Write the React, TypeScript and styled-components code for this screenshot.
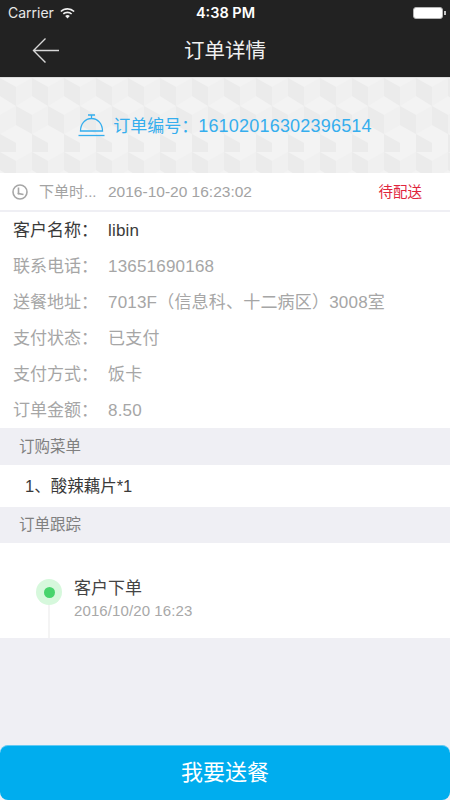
import styled, { createGlobalStyle } from 'styled-components'

const GlobalStyle = createGlobalStyle`
  html, body {
    margin: 0;
    padding: 0;
    background: #efeff4;
  }
  * {
    box-sizing: border-box;
  }
`

const font = `'Liberation Sans', 'Noto Sans CJK SC', sans-serif`

const cubes = encodeURIComponent(
  `<svg xmlns='http://www.w3.org/2000/svg' width='64' height='74'>` +
    `<rect width='64' height='74' fill='#f3f3f3'/>` +
    `<path d='M0 0l16 9v19L0 18zM32 0l16 9v19L32 18zM16 28l16 9v19l-16-9zM48 28l16 9v19l-16-9zM0 56l16 9v9H0zM32 56l16 9v9H32z' fill='#ebebeb'/>` +
    `<path d='M16 9l16-9v18l-16 10zM48 9l16-9v18l-16 10zM0 37l16-9v19L0 56zM32 37l16-9v19l-16 9z' fill='#f0f0f0'/>` +
    `</svg>`
)

const Page = styled.div`
  display: flex;
  flex-direction: column;
  width: 450px;
  height: 800px;
  overflow: hidden;
  background: #efeff4;
  font-family: ${font};
  line-height: 1;
`

const Header = styled.header`
  background: #222222;
  color: white;
  height: 77px;
`

const StatusBar = styled.div`
  display: grid;
  grid-template-columns: 1fr auto 1fr;
  align-items: center;
  height: 26px;
  padding: 0 7px 0 8px;
  font-family: 'Inter', sans-serif;
  font-size: 14px;
`

const Carrier = styled.div`
  display: flex;
  align-items: center;
  gap: 6px;
  color: #e8e8e8;
`

const Clock = styled.div`
  font-size: 14.5px;
  font-weight: 600;
`

const Battery = styled.div`
  justify-self: end;
  position: relative;
  width: 30px;
  height: 12px;
  border: 1px solid #b5b5b5;
  border-radius: 3px;
  background: white;

  &::after {
    content: '';
    position: absolute;
    right: -4px;
    top: 3px;
    width: 2px;
    height: 4px;
    background: #c4c4c4;
  }
`

const NavBar = styled.div`
  position: relative;
  display: flex;
  justify-content: center;
  align-items: center;
  height: 51px;
  font-size: 20.5px;
  color: #f0f0f0;
`

const BackButton = styled.button`
  position: absolute;
  left: 32px;
  top: 11px;
  display: flex;
  padding: 0;
  border: 0;
  background: none;
`

const Banner = styled.div`
  display: flex;
  justify-content: center;
  align-items: center;
  gap: 8px;
  height: 96px;
  border-top: 1px solid #dddddd;
  background: url("data:image/svg+xml,${cubes}");
  color: #35aeee;
  font-size: 17px;
`

const OrderNumber = styled.span`
  font-size: 18px;
  letter-spacing: 0.2px;
`

const TimeRow = styled.div`
  display: flex;
  align-items: center;
  height: 37px;
  padding: 0 28px 0 12px;
  background: white;
  color: #a3a3a3;
  font-size: 15px;
`

const TimeLabel = styled.span`
  width: 69px;
  margin-left: 11px;
`

const TimeValue = styled.span`
  flex: 1;
  font-size: 15.5px;
`

const Status = styled.span`
  padding-top: 2px;
  font-size: 14.5px;
  color: #e0253c;
`

const InfoList = styled.div`
  margin-top: 2px;
  background: white;
`

const InfoRow = styled.div<{ $dark?: boolean }>`
  display: flex;
  align-items: center;
  height: 36px;
  padding-left: 13px;
  font-size: 17px;
  color: ${(p) => (p.$dark ? '#3a3a3a' : '#a6a6a6')};
`

const InfoLabel = styled.span`
  width: 95px;
`

const InfoValue = styled.span`
  letter-spacing: 0.2px;
`

const SectionTitle = styled.div<{ $height: number }>`
  display: flex;
  align-items: center;
  height: ${(p) => p.$height}px;
  padding-left: 19px;
  font-size: 15.5px;
  color: #808080;
`

const MenuItem = styled.div`
  display: flex;
  align-items: center;
  height: 42px;
  padding-left: 25px;
  background: white;
  font-size: 16.5px;
  color: #3a3a3a;
`

const Track = styled.div`
  display: flex;
  height: 95px;
  padding: 36px 0 0 36px;
  background: white;
`

const TrackMarker = styled.div`
  display: flex;
  flex-direction: column;
  align-items: center;
  width: 26px;
`

const Halo = styled.div`
  display: flex;
  flex-shrink: 0;
  justify-content: center;
  align-items: center;
  width: 26px;
  height: 26px;
  border-radius: 50%;
  background: #d6f8dc;
`

const Dot = styled.div`
  width: 11px;
  height: 11px;
  border-radius: 50%;
  background: #47d46c;
`

const TrackLine = styled.div`
  flex: 1;
  width: 2px;
  background: #f4f4f4;
`

const TrackBody = styled.div`
  margin-left: 12px;
`

const TrackTitle = styled.div`
  font-size: 17px;
  line-height: 20px;
  color: #444444;
`

const TrackTime = styled.div`
  margin-top: 2px;
  font-size: 15px;
  line-height: 20px;
  letter-spacing: 0.1px;
  color: #a8a8a8;
`

const DeliverButton = styled.button`
  margin-top: auto;
  height: 55px;
  padding: 0;
  border: 0;
  border-top: 1px solid #62c9f3;
  border-radius: 8px;
  background: #00adee;
  color: white;
  font-size: 22px;
  line-height: 1;
  font-family: ${font};
`

const BackIcon = () => (
  <svg width="28" height="28" viewBox="0 0 28 28" fill="none" stroke="#d8d8d8" strokeWidth="1.4">
    <path d="M13.500 1.500 1.500 13.500 13.500 25.500M1.500 13.500H27" />
  </svg>
)

const WifiIcon = () => (
  <svg width="15" height="11" viewBox="0 0 15 11" fill="#f0f0f0">
    <path d="M7.500 0C4.700 0 2.200 1.100.3 2.900l1.100 1.200A8.800 8.800 0 0 1 7.500 1.700c2.400 0 4.500.9 6.100 2.400l1.100-1.200A10.400 10.400 0 0 0 7.500 0Z" />
    <path d="M7.500 3.500c-1.800 0-3.500.7-4.700 1.900l1.100 1.200a5.200 5.200 0 0 1 7.200 0l1.100-1.200a6.800 6.800 0 0 0-4.700-1.900Z" />
    <path d="M7.500 7c-.9 0-1.700.3-2.300.9l2.300 2.600 2.300-2.600c-.6-.6-1.400-.9-2.300-.9Z" />
  </svg>
)

const BellIcon = () => (
  <svg width="27" height="23" viewBox="0 0 27 23" fill="none" stroke="#35aeee" strokeWidth="1.300">
    <path d="M10 1h7M13.500 1v3M2.500 17C2.500 10 7 4.500 13.500 4.500S24.500 10 24.500 17Z" />
    <path d="M0.500 21.500h26" />
  </svg>
)

const ClockIcon = () => (
  <svg width="16" height="16" viewBox="0 0 16 16" fill="none" stroke="#a6a6a6" strokeWidth="1.600">
    <circle cx="8" cy="8" r="7" />
    <path d="M6.500 3.500V9.500L11.500 10.500" />
    <circle cx="6.500" cy="9.500" r="1" fill="#a6a6a6" stroke="none" />
  </svg>
)

const infoRows = [
  { label: '客户名称：', value: 'libin', dark: true },
  { label: '联系电话：', value: '13651690168' },
  { label: '送餐地址：', value: '7013F（信息科、十二病区）3008室' },
  { label: '支付状态：', value: '已支付' },
  { label: '支付方式：', value: '饭卡' },
  { label: '订单金额：', value: '8.50' },
]

const App = () => {
  return (
    <Page>
      <GlobalStyle />
      <Header>
        <StatusBar>
          <Carrier>
            Carrier <WifiIcon />
          </Carrier>
          <Clock>4:38 PM</Clock>
          <Battery />
        </StatusBar>
        <NavBar>
          <BackButton>
            <BackIcon />
          </BackButton>
          订单详情
        </NavBar>
      </Header>

      <Banner>
        <BellIcon />
        <span>
          订单编号：<OrderNumber>16102016302396514</OrderNumber>
        </span>
      </Banner>

      <TimeRow>
        <ClockIcon />
        <TimeLabel>下单时...</TimeLabel>
        <TimeValue>2016-10-20 16:23:02</TimeValue>
        <Status>待配送</Status>
      </TimeRow>

      <InfoList>
        {infoRows.map((row) => (
          <InfoRow key={row.label} $dark={row.dark}>
            <InfoLabel>{row.label}</InfoLabel>
            <InfoValue>{row.value}</InfoValue>
          </InfoRow>
        ))}
      </InfoList>

      <SectionTitle $height={37}>订购菜单</SectionTitle>
      <MenuItem>1、酸辣藕片*1</MenuItem>
      <SectionTitle $height={36}>订单跟踪</SectionTitle>

      <Track>
        <TrackMarker>
          <Halo>
            <Dot />
          </Halo>
          <TrackLine />
        </TrackMarker>
        <TrackBody>
          <TrackTitle>客户下单</TrackTitle>
          <TrackTime>2016/10/20 16:23</TrackTime>
        </TrackBody>
      </Track>

      <DeliverButton>我要送餐</DeliverButton>
    </Page>
  )
}

export default App
